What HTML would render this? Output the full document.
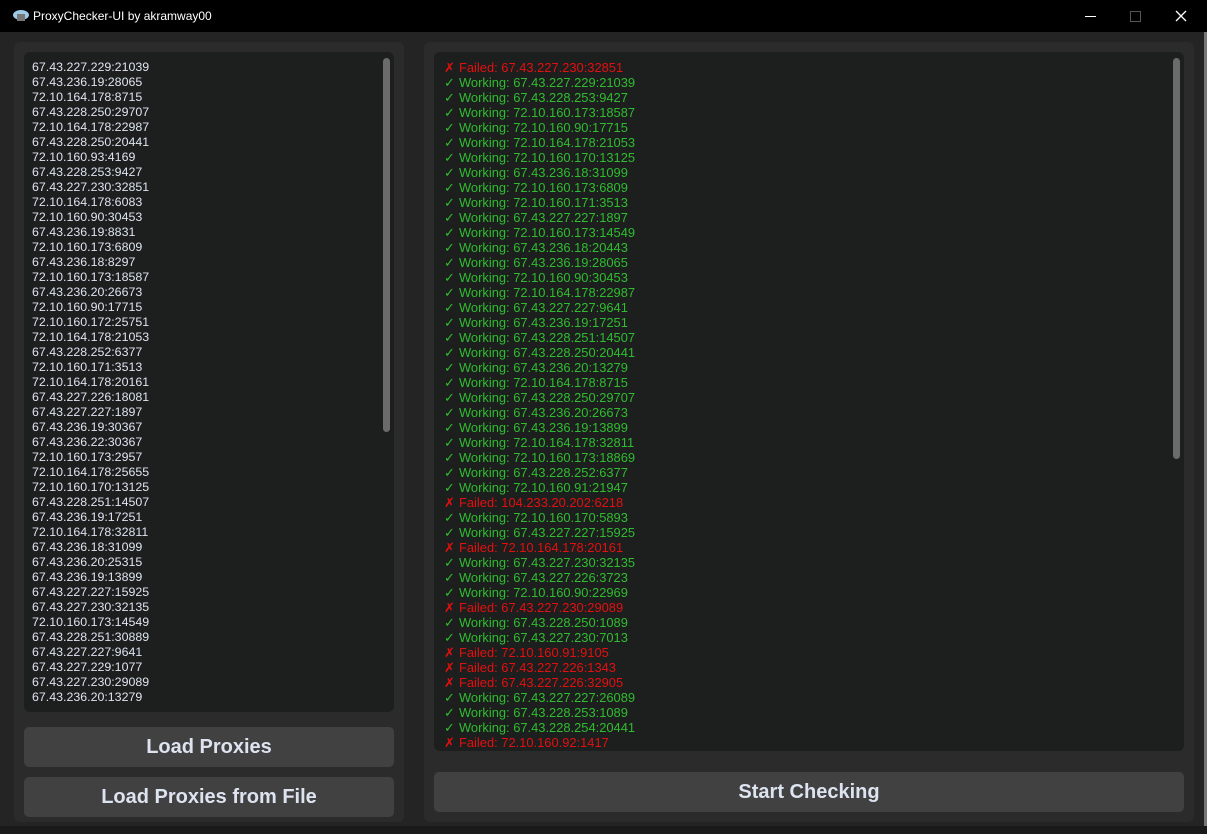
<html><head><style>
body{margin:0;width:1207px;height:834px;background:#242424;overflow:hidden;font-family:"Liberation Sans",sans-serif;position:relative}
.tb{position:absolute;left:0;top:0;width:1207px;height:32px;background:#000;color:#fff;font-size:12px}
.frame{position:absolute;background:#2b2b2b;border-radius:6px}
.box{position:absolute;background:#1d1e1e;border-radius:6px;overflow:hidden}
.lines{position:absolute;left:8px;font-size:12.4px;line-height:15px;white-space:pre}
.btn{position:absolute;background:#414141;border-radius:5px;color:#dde4f0;font-weight:bold;font-size:20px;text-align:center;line-height:40px}
.sb{position:absolute;width:7px;background:#6b6b6b;border-radius:4px}
.g{color:#2fbd2f}.r{color:#e31010}
.rl{font-size:12.9px}
.rl i{font-style:normal;display:inline-block;width:15px}
</style></head><body>
<div class="tb">
<svg style="position:absolute;left:12px;top:9px" width="18" height="14"><ellipse cx="9" cy="6" rx="8" ry="5" fill="#9ccbe8"/><rect x="5" y="5" width="8" height="7" fill="#777"/></svg>
<span style="position:absolute;left:33px;top:9px">ProxyChecker-UI by akramway00</span>
<div style="position:absolute;left:1085px;top:16px;width:11px;height:1px;background:#fff"></div>
<div style="position:absolute;left:1130px;top:11px;width:9px;height:9px;border:1px solid #555"></div>
<svg style="position:absolute;left:1175px;top:10px" width="12" height="12"><path d="M1 1L11 11M11 1L1 11" stroke="#fff" stroke-width="1.3"/></svg>
</div>
<div style="position:absolute;left:1204px;top:32px;width:3px;height:802px;background:#777"></div>
<div style="position:absolute;left:0;top:826px;width:1207px;height:8px;background:#1a1a1a"></div>
<div class="frame" style="left:14px;top:42px;width:390px;height:780px"></div>
<div class="box" style="left:24px;top:52px;width:370px;height:660px;color:#dde4f0">
<div class="lines" style="top:8px">67.43.227.229:21039
67.43.236.19:28065
72.10.164.178:8715
67.43.228.250:29707
72.10.164.178:22987
67.43.228.250:20441
72.10.160.93:4169
67.43.228.253:9427
67.43.227.230:32851
72.10.164.178:6083
72.10.160.90:30453
67.43.236.19:8831
72.10.160.173:6809
67.43.236.18:8297
72.10.160.173:18587
67.43.236.20:26673
72.10.160.90:17715
72.10.160.172:25751
72.10.164.178:21053
67.43.228.252:6377
72.10.160.171:3513
72.10.164.178:20161
67.43.227.226:18081
67.43.227.227:1897
67.43.236.19:30367
67.43.236.22:30367
72.10.160.173:2957
72.10.164.178:25655
72.10.160.170:13125
67.43.228.251:14507
67.43.236.19:17251
72.10.164.178:32811
67.43.236.18:31099
67.43.236.20:25315
67.43.236.19:13899
67.43.227.227:15925
67.43.227.230:32135
72.10.160.173:14549
67.43.228.251:30889
67.43.227.227:9641
67.43.227.229:1077
67.43.227.230:29089
67.43.236.20:13279</div>
<div class="sb" style="left:359px;top:6px;height:374px"></div>
</div>
<div class="btn" style="left:24px;top:727px;width:370px;height:40px">Load Proxies</div>
<div class="btn" style="left:24px;top:777px;width:370px;height:40px">Load Proxies from File</div>
<div class="frame" style="left:424px;top:42px;width:770px;height:780px"></div>
<div class="box" style="left:434px;top:52px;width:750px;height:699px">
<div class="lines rl" style="top:8px;left:10px"><span class="r"><i>✗</i>Failed: 67.43.227.230:32851</span>
<span class="g"><i>✓</i>Working: 67.43.227.229:21039
<i>✓</i>Working: 67.43.228.253:9427
<i>✓</i>Working: 72.10.160.173:18587
<i>✓</i>Working: 72.10.160.90:17715
<i>✓</i>Working: 72.10.164.178:21053
<i>✓</i>Working: 72.10.160.170:13125
<i>✓</i>Working: 67.43.236.18:31099
<i>✓</i>Working: 72.10.160.173:6809
<i>✓</i>Working: 72.10.160.171:3513
<i>✓</i>Working: 67.43.227.227:1897
<i>✓</i>Working: 72.10.160.173:14549
<i>✓</i>Working: 67.43.236.18:20443
<i>✓</i>Working: 67.43.236.19:28065
<i>✓</i>Working: 72.10.160.90:30453
<i>✓</i>Working: 72.10.164.178:22987
<i>✓</i>Working: 67.43.227.227:9641
<i>✓</i>Working: 67.43.236.19:17251
<i>✓</i>Working: 67.43.228.251:14507
<i>✓</i>Working: 67.43.228.250:20441
<i>✓</i>Working: 67.43.236.20:13279
<i>✓</i>Working: 72.10.164.178:8715
<i>✓</i>Working: 67.43.228.250:29707
<i>✓</i>Working: 67.43.236.20:26673
<i>✓</i>Working: 67.43.236.19:13899
<i>✓</i>Working: 72.10.164.178:32811
<i>✓</i>Working: 72.10.160.173:18869
<i>✓</i>Working: 67.43.228.252:6377
<i>✓</i>Working: 72.10.160.91:21947</span>
<span class="r"><i>✗</i>Failed: 104.233.20.202:6218</span>
<span class="g"><i>✓</i>Working: 72.10.160.170:5893
<i>✓</i>Working: 67.43.227.227:15925</span>
<span class="r"><i>✗</i>Failed: 72.10.164.178:20161</span>
<span class="g"><i>✓</i>Working: 67.43.227.230:32135
<i>✓</i>Working: 67.43.227.226:3723
<i>✓</i>Working: 72.10.160.90:22969</span>
<span class="r"><i>✗</i>Failed: 67.43.227.230:29089</span>
<span class="g"><i>✓</i>Working: 67.43.228.250:1089
<i>✓</i>Working: 67.43.227.230:7013</span>
<span class="r"><i>✗</i>Failed: 72.10.160.91:9105
<i>✗</i>Failed: 67.43.227.226:1343
<i>✗</i>Failed: 67.43.227.226:32905</span>
<span class="g"><i>✓</i>Working: 67.43.227.227:26089
<i>✓</i>Working: 67.43.228.253:1089
<i>✓</i>Working: 67.43.228.254:20441</span>
<span class="r"><i>✗</i>Failed: 72.10.160.92:1417</span></div>
<div class="sb" style="left:739px;top:6px;height:401px"></div>
</div>
<div class="btn" style="left:434px;top:772px;width:750px;height:40px">Start Checking</div>
</body></html>
